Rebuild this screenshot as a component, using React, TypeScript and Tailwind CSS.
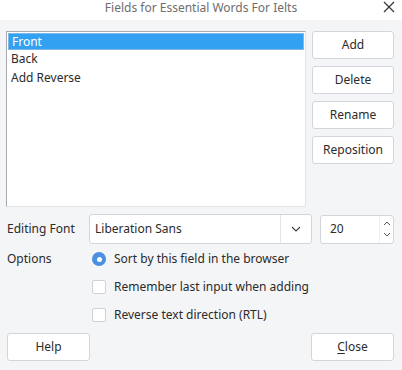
import React from "react";

const font = { fontFamily: '"Noto Sans", "Open Sans", sans-serif' };

function Btn({ children, className = "" }: { children: React.ReactNode; className?: string }) {
  return (
    <div
      className={
        "flex items-center justify-center h-[28px] bg-white border border-[#d3d5dc] rounded-[3px] text-[12px] text-[#2b2b2b] " +
        className
      }
    >
      {children}
    </div>
  );
}

export default function App() {
  return (
    <div style={font} className="w-[402px] h-[370px] bg-[#f4f5f7] flex flex-col overflow-hidden">
      <div className="h-[20px] bg-white relative flex items-start justify-center pt-[1px]">
        <span className="text-[12px] text-[#6e6e6e] leading-[14px]">Fields for Essential Words For Ielts</span>
        <span className="absolute right-[7px] top-[1px] leading-none">
          <svg width="12" height="12" viewBox="0 0 12 12">
            <path d="M1 1 L11 11 M11 1 L1 11" stroke="#333" strokeWidth="1.2" />
          </svg>
        </span>
      </div>
      <div className="flex pl-[6px] pt-[11px]">
        <div className="w-[300px] h-[176px] bg-white border border-[#a9abae] border-r-[#e3e4e6] border-b-[#e3e4e6] pt-[1px] px-[1px]">
          <div className="h-[17px] bg-[#33a1f2] text-white text-[12px] leading-[15px] pl-[3px] border border-[#7fb7e6]">Front</div>
          <div className="h-[18px] text-[12px] leading-[18px] pl-[3px] text-[#2b2b2b]">Back</div>
          <div className="h-[19px] text-[12px] leading-[19px] pl-[3px] text-[#2b2b2b]">Add Reverse</div>
        </div>
        <div className="ml-[6px] w-[82px] flex flex-col gap-[7px]">
          <Btn>Add</Btn>
          <Btn>Delete</Btn>
          <Btn>Rename</Btn>
          <Btn>Reposition</Btn>
        </div>
      </div>
      <div className="flex items-center mt-[7px] pl-[7px] h-[30px]">
        <span className="w-[82px] text-[12px] text-[#2b2b2b]">Editing Font</span>
        <div className="w-[223px] h-[30px] bg-white border border-[#d3d5dc] rounded-[3px] flex items-center">
          <span className="flex-1 pl-[5px] text-[12px] text-[#2b2b2b]">Liberation Sans</span>
          <div className="w-[31px] h-full border-l border-[#e3e4e8] flex items-center justify-center">
            <svg width="10" height="6" viewBox="0 0 10 6">
              <path d="M1 1 L5 5 L9 1" stroke="#444" strokeWidth="1.2" fill="none" />
            </svg>
          </div>
        </div>
        <div className="ml-[8px] w-[74px] h-[29px] bg-white border border-[#d3d5dc] rounded-[3px] flex items-center relative">
          <span className="pl-[9px] text-[12px] text-[#2b2b2b] flex-1">20</span>
          <div className="w-[14px] h-full border-l border-[#eceef0] flex flex-col items-center justify-center gap-[6px]">
            <svg width="8" height="5" viewBox="0 0 8 5">
              <path d="M1 4 L4 1 L7 4" stroke="#555" strokeWidth="1" fill="none" />
            </svg>
            <svg width="8" height="5" viewBox="0 0 8 5">
              <path d="M1 1 L4 4 L7 1" stroke="#555" strokeWidth="1" fill="none" />
            </svg>
          </div>
        </div>
      </div>
      <div className="flex items-center pl-[7px] mt-[6px] h-[18px]">
        <span className="w-[85px] text-[12px] text-[#2b2b2b]">Options</span>
        <div className="w-[14px] h-[14px] rounded-full bg-[#4a8fe0] flex items-center justify-center">
          <div className="w-[5px] h-[5px] rounded-full bg-white" />
        </div>
        <span className="ml-[8px] text-[12px] text-[#2b2b2b]">Sort by this field in the browser</span>
      </div>
      <div className="flex items-center pl-[92px] mt-[10px] h-[18px]">
        <div className="w-[14px] h-[14px] rounded-[2px] bg-white border border-[#d0d2d8]" />
        <span className="ml-[8px] text-[12px] text-[#2b2b2b]">Remember last input when adding</span>
      </div>
      <div className="flex items-center pl-[92px] mt-[10px] h-[18px]">
        <div className="w-[14px] h-[14px] rounded-[2px] bg-white border border-[#d0d2d8]" />
        <span className="ml-[8px] text-[12px] text-[#2b2b2b]">Reverse text direction (RTL)</span>
      </div>
      <div className="flex justify-between px-[7px] pr-[8px] mt-[9px]">
        <Btn className="w-[83px]">Help</Btn>
        <Btn className="w-[83px]">
          <span>
            <span className="underline underline-offset-2">C</span>lose
          </span>
        </Btn>
      </div>
    </div>
  );
}
